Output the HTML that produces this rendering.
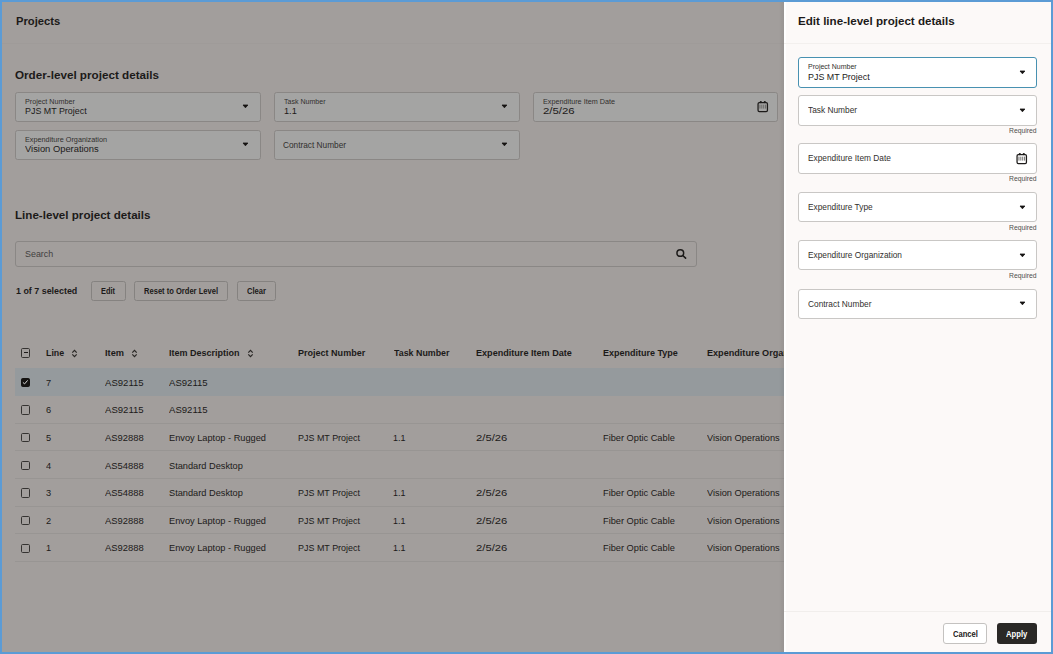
<!DOCTYPE html>
<html><head><meta charset="utf-8">
<style>
*{box-sizing:border-box;margin:0;padding:0}
html,body{width:1053px;height:654px;overflow:hidden}
body{position:relative;background:#a29e9c;font-family:"Liberation Sans",sans-serif;color:#1c1a19}
.t{position:absolute;white-space:nowrap;line-height:1;transform-origin:0 0}
.fld{position:absolute;height:30px;border:1px solid #8a8785;border-radius:2.6px;background:#a4a4a3}
.arr{position:absolute;width:0;height:0;border-left:2.75px solid transparent;border-right:2.75px solid transparent;border-top:3.3px solid #151311}
.btn{position:absolute;height:20.1px;border:1px solid #858280;border-radius:2.5px}
.row{position:absolute;left:15px;width:769px;height:27.65px;border-bottom:1px solid #989593}
.cb{position:absolute;width:9.4px;height:9.4px;border:1.2px solid #353331;border-radius:1.6px}
.dfld{position:absolute;left:797.5px;width:239.5px;height:30.4px;border:1px solid #c9c7c5;border-radius:3px;background:#fff}
</style></head><body>
<div style="position:absolute;left:2px;top:43px;width:782px;height:1px;background:#9f9b99"></div>
<div class="t" id="t0" style="left:15.5px;top:15.16px;font-size:11.65px;font-weight:700;color:#1c1a19;transform:scaleX(0.9622);">Projects</div>
<div class="t" id="t1" style="left:15.3px;top:69.07px;font-size:11.75px;font-weight:700;color:#1c1a19;transform:scaleX(0.9932);">Order-level project details</div>
<div class="fld" style="left:15px;top:92px;width:245.5px"></div>
<div class="t" id="t2" style="left:25px;top:97.83px;font-size:7.3px;font-weight:400;color:#32302e;transform:scaleX(0.9842);">Project Number</div>
<div class="t" id="t3" style="left:25px;top:105.89px;font-size:9.6px;font-weight:400;color:#1c1a19;transform:scaleX(0.9268);">PJS MT Project</div>
<svg style="position:absolute;left:241.6px;top:104.3px" width="7" height="5" viewBox="0 0 7 5"><path d="M1.0 1.0 H5.9 L3.45 3.8 Z" fill="#151311" stroke="#151311" stroke-width="0.8" stroke-linejoin="round"/></svg>
<div class="fld" style="left:274px;top:92px;width:245.5px"></div>
<div class="t" id="t4" style="left:284px;top:97.83px;font-size:7.3px;font-weight:400;color:#32302e;transform:scaleX(0.9655);">Task Number</div>
<div class="t" id="t5" style="left:284px;top:105.89px;font-size:9.6px;font-weight:400;color:#1c1a19;transform:scaleX(0.9593);">1.1</div>
<svg style="position:absolute;left:500.6px;top:104.3px" width="7" height="5" viewBox="0 0 7 5"><path d="M1.0 1.0 H5.9 L3.45 3.8 Z" fill="#151311" stroke="#151311" stroke-width="0.8" stroke-linejoin="round"/></svg>
<div class="fld" style="left:533px;top:92px;width:245px"></div>
<div class="t" id="t6" style="left:543px;top:97.83px;font-size:7.3px;font-weight:400;color:#32302e;transform:scaleX(0.9916);">Expenditure Item Date</div>
<div class="t" id="t7" style="left:543px;top:105.89px;font-size:9.6px;font-weight:400;color:#1c1a19;transform:scaleX(1.1878);">2/5/26</div>
<svg style="position:absolute;left:756px;top:100px" width="14" height="14" viewBox="0 0 14 14"><rect x="2.05" y="2.6" width="9.4" height="8.9" rx="1.3" fill="none" stroke="#1c1a19" stroke-width="1.25"/><circle cx="4.8" cy="2.1" r="1.1" fill="#1c1a19"/><circle cx="8.8" cy="2.1" r="1.1" fill="#1c1a19"/><g fill="#62605e"><rect x="3.5" y="4.6" width="0.9" height="4.0"/><rect x="5.4" y="4.6" width="0.9" height="4.0"/><rect x="7.3" y="4.6" width="0.9" height="4.0"/><rect x="9.2" y="4.6" width="0.9" height="4.0"/></g></svg>
<div class="fld" style="left:15px;top:130px;width:245.5px"></div>
<div class="t" id="t8" style="left:25px;top:135.83px;font-size:7.3px;font-weight:400;color:#32302e;transform:scaleX(0.9958);">Expenditure Organization</div>
<div class="t" id="t9" style="left:25px;top:143.89px;font-size:9.6px;font-weight:400;color:#1c1a19;transform:scaleX(0.9754);">Vision Operations</div>
<svg style="position:absolute;left:241.6px;top:142.3px" width="7" height="5" viewBox="0 0 7 5"><path d="M1.0 1.0 H5.9 L3.45 3.8 Z" fill="#151311" stroke="#151311" stroke-width="0.8" stroke-linejoin="round"/></svg>
<div class="fld" style="left:274px;top:130px;width:245.5px"></div>
<div class="t" id="t10" style="left:283px;top:140.50px;font-size:8.4px;font-weight:400;color:#32302e;transform:scaleX(0.9880);">Contract Number</div>
<svg style="position:absolute;left:500.6px;top:142.3px" width="7" height="5" viewBox="0 0 7 5"><path d="M1.0 1.0 H5.9 L3.45 3.8 Z" fill="#151311" stroke="#151311" stroke-width="0.8" stroke-linejoin="round"/></svg>
<div class="t" id="t11" style="left:15.3px;top:209.16px;font-size:11.65px;font-weight:700;color:#1c1a19;transform:scaleX(0.9974);">Line-level project details</div>
<div style="position:absolute;left:15px;top:241px;width:682px;height:25.6px;border:1px solid #8a8785;border-radius:3px"></div>
<div class="t" id="t12" style="left:24.8px;top:250.48px;font-size:8.9px;font-weight:400;color:#43413f;transform:scaleX(1.0027);">Search</div>
<svg style="position:absolute;left:675px;top:247px" width="13" height="13" viewBox="0 0 13 13"><circle cx="5.3" cy="6.0" r="3.35" fill="none" stroke="#1c1a19" stroke-width="1.5"/><line x1="7.8" y1="8.5" x2="10.6" y2="11.1" stroke="#1c1a19" stroke-width="1.6" stroke-linecap="round"/></svg>
<div class="t" id="t13" style="left:15.6px;top:286.00px;font-size:9.7px;font-weight:700;color:#1c1a19;transform:scaleX(0.9179);">1 of 7 selected</div>
<div class="btn" style="left:91.2px;top:281.1px;width:34.4px"></div>
<div class="t" id="t14" style="left:101.4px;top:286.93px;font-size:8.6px;font-weight:700;color:#1c1a19;transform:scaleX(0.8624);">Edit</div>
<div class="btn" style="left:134.1px;top:281.1px;width:93.5px"></div>
<div class="t" id="t15" style="left:143.85px;top:286.93px;font-size:8.6px;font-weight:700;color:#1c1a19;transform:scaleX(0.8803);">Reset to Order Level</div>
<div class="btn" style="left:237px;top:281.1px;width:38.5px"></div>
<div class="t" id="t16" style="left:246.75px;top:286.93px;font-size:8.6px;font-weight:700;color:#1c1a19;transform:scaleX(0.8837);">Clear</div>
<div class="cb" style="left:21px;top:348.2px"><div style="position:absolute;left:1.6px;top:2.9px;width:4.3px;height:1.4px;background:#1c1a19"></div></div>
<div class="t" id="t17" style="left:45.6px;top:348.51px;font-size:9.1px;font-weight:700;color:#1c1a19;transform:scaleX(0.9731);">Line</div>
<div class="t" id="t18" style="left:104.8px;top:348.51px;font-size:9.1px;font-weight:700;color:#1c1a19;transform:scaleX(1.0159);">Item</div>
<div class="t" id="t19" style="left:169px;top:348.51px;font-size:9.1px;font-weight:700;color:#1c1a19;transform:scaleX(0.9895);">Item Description</div>
<div class="t" id="t20" style="left:297.5px;top:348.51px;font-size:9.1px;font-weight:700;color:#1c1a19;transform:scaleX(0.9923);">Project Number</div>
<div class="t" id="t21" style="left:393.5px;top:348.51px;font-size:9.1px;font-weight:700;color:#1c1a19;transform:scaleX(0.9745);">Task Number</div>
<div class="t" id="t22" style="left:476.2px;top:348.51px;font-size:9.1px;font-weight:700;color:#1c1a19;transform:scaleX(0.9978);">Expenditure Item Date</div>
<div class="t" id="t23" style="left:603px;top:348.51px;font-size:9.1px;font-weight:700;color:#1c1a19;transform:scaleX(0.9889);">Expenditure Type</div>
<div class="t" id="t24" style="left:707px;top:348.51px;font-size:9.1px;font-weight:700;color:#1c1a19;">Expenditure Organization</div>
<svg style="position:absolute;left:71px;top:348.5px" width="7" height="10" viewBox="0 0 7 10"><path d="M1.3 3.7 L3.5 1.4 L5.7 3.7 M1.3 5.4 L3.5 7.7 L5.7 5.4" fill="none" stroke="#2a2826" stroke-width="1.2"/></svg>
<svg style="position:absolute;left:130.5px;top:348.5px" width="7" height="10" viewBox="0 0 7 10"><path d="M1.3 3.7 L3.5 1.4 L5.7 3.7 M1.3 5.4 L3.5 7.7 L5.7 5.4" fill="none" stroke="#2a2826" stroke-width="1.2"/></svg>
<svg style="position:absolute;left:246.5px;top:348.5px" width="7" height="10" viewBox="0 0 7 10"><path d="M1.3 3.7 L3.5 1.4 L5.7 3.7 M1.3 5.4 L3.5 7.7 L5.7 5.4" fill="none" stroke="#2a2826" stroke-width="1.2"/></svg>
<div class="row" style="top:368.4px;background:#959a9d;border-bottom-color:#959a9d"></div>
<div class="cb" style="left:21px;top:377.7px;background:#151311;border-color:#151311"><svg style="position:absolute;left:0.3px;top:0.4px" width="7" height="7" viewBox="0 0 7 7"><path d="M0.9 3.4 L2.6 4.9 L5.6 1.4" fill="none" stroke="#d4d4d4" stroke-width="1.0"/></svg></div>
<div class="t" id="t25" style="left:45.8px;top:377.57px;font-size:9.8px;font-weight:400;color:#1c1a19;transform:scaleX(0.9422);">7</div>
<div class="t" id="t26" style="left:104.8px;top:377.57px;font-size:9.8px;font-weight:400;color:#1c1a19;transform:scaleX(0.9774);">AS92115</div>
<div class="t" id="t27" style="left:169px;top:377.57px;font-size:9.8px;font-weight:400;color:#1c1a19;transform:scaleX(0.9774);">AS92115</div>
<div class="row" style="top:396.04999999999995px"></div>
<div class="cb" style="left:21px;top:405.34999999999997px"></div>
<div class="t" id="t28" style="left:45.8px;top:405.22px;font-size:9.8px;font-weight:400;color:#1c1a19;transform:scaleX(0.9422);">6</div>
<div class="t" id="t29" style="left:104.8px;top:405.22px;font-size:9.8px;font-weight:400;color:#1c1a19;transform:scaleX(0.9774);">AS92115</div>
<div class="t" id="t30" style="left:169px;top:405.22px;font-size:9.8px;font-weight:400;color:#1c1a19;transform:scaleX(0.9774);">AS92115</div>
<div class="row" style="top:423.7px"></div>
<div class="cb" style="left:21px;top:433.0px"></div>
<div class="t" id="t31" style="left:45.8px;top:432.87px;font-size:9.8px;font-weight:400;color:#1c1a19;transform:scaleX(0.9422);">5</div>
<div class="t" id="t32" style="left:104.8px;top:432.87px;font-size:9.8px;font-weight:400;color:#1c1a19;transform:scaleX(0.9600);">AS92888</div>
<div class="t" id="t33" style="left:169px;top:432.87px;font-size:9.8px;font-weight:400;color:#1c1a19;transform:scaleX(0.9422);">Envoy Laptop - Rugged</div>
<div class="t" id="t34" style="left:297.5px;top:432.87px;font-size:9.8px;font-weight:400;color:#1c1a19;transform:scaleX(0.9134);">PJS MT Project</div>
<div class="t" id="t35" style="left:393.3px;top:432.87px;font-size:9.8px;font-weight:400;color:#1c1a19;transform:scaleX(0.9101);">1.1</div>
<div class="t" id="t36" style="left:476.4px;top:432.87px;font-size:9.8px;font-weight:400;color:#1c1a19;transform:scaleX(1.1486);">2/5/26</div>
<div class="t" id="t37" style="left:603px;top:432.87px;font-size:9.8px;font-weight:400;color:#1c1a19;transform:scaleX(0.9422);">Fiber Optic Cable</div>
<div class="t" id="t38" style="left:707px;top:432.87px;font-size:9.8px;font-weight:400;color:#1c1a19;transform:scaleX(0.9422);">Vision Operations</div>
<div class="row" style="top:451.34999999999997px"></div>
<div class="cb" style="left:21px;top:460.65px"></div>
<div class="t" id="t39" style="left:45.8px;top:460.52px;font-size:9.8px;font-weight:400;color:#1c1a19;transform:scaleX(0.9422);">4</div>
<div class="t" id="t40" style="left:104.8px;top:460.52px;font-size:9.8px;font-weight:400;color:#1c1a19;transform:scaleX(0.9600);">AS54888</div>
<div class="t" id="t41" style="left:169px;top:460.52px;font-size:9.8px;font-weight:400;color:#1c1a19;transform:scaleX(0.9422);">Standard Desktop</div>
<div class="row" style="top:479.0px"></div>
<div class="cb" style="left:21px;top:488.3px"></div>
<div class="t" id="t42" style="left:45.8px;top:488.17px;font-size:9.8px;font-weight:400;color:#1c1a19;transform:scaleX(0.9422);">3</div>
<div class="t" id="t43" style="left:104.8px;top:488.17px;font-size:9.8px;font-weight:400;color:#1c1a19;transform:scaleX(0.9600);">AS54888</div>
<div class="t" id="t44" style="left:169px;top:488.17px;font-size:9.8px;font-weight:400;color:#1c1a19;transform:scaleX(0.9422);">Standard Desktop</div>
<div class="t" id="t45" style="left:297.5px;top:488.17px;font-size:9.8px;font-weight:400;color:#1c1a19;transform:scaleX(0.9134);">PJS MT Project</div>
<div class="t" id="t46" style="left:393.3px;top:488.17px;font-size:9.8px;font-weight:400;color:#1c1a19;transform:scaleX(0.9101);">1.1</div>
<div class="t" id="t47" style="left:476.4px;top:488.17px;font-size:9.8px;font-weight:400;color:#1c1a19;transform:scaleX(1.1486);">2/5/26</div>
<div class="t" id="t48" style="left:603px;top:488.17px;font-size:9.8px;font-weight:400;color:#1c1a19;transform:scaleX(0.9422);">Fiber Optic Cable</div>
<div class="t" id="t49" style="left:707px;top:488.17px;font-size:9.8px;font-weight:400;color:#1c1a19;transform:scaleX(0.9422);">Vision Operations</div>
<div class="row" style="top:506.65px"></div>
<div class="cb" style="left:21px;top:515.9499999999999px"></div>
<div class="t" id="t50" style="left:45.8px;top:515.82px;font-size:9.8px;font-weight:400;color:#1c1a19;transform:scaleX(0.9422);">2</div>
<div class="t" id="t51" style="left:104.8px;top:515.82px;font-size:9.8px;font-weight:400;color:#1c1a19;transform:scaleX(0.9600);">AS92888</div>
<div class="t" id="t52" style="left:169px;top:515.82px;font-size:9.8px;font-weight:400;color:#1c1a19;transform:scaleX(0.9422);">Envoy Laptop - Rugged</div>
<div class="t" id="t53" style="left:297.5px;top:515.82px;font-size:9.8px;font-weight:400;color:#1c1a19;transform:scaleX(0.9134);">PJS MT Project</div>
<div class="t" id="t54" style="left:393.3px;top:515.82px;font-size:9.8px;font-weight:400;color:#1c1a19;transform:scaleX(0.9101);">1.1</div>
<div class="t" id="t55" style="left:476.4px;top:515.82px;font-size:9.8px;font-weight:400;color:#1c1a19;transform:scaleX(1.1486);">2/5/26</div>
<div class="t" id="t56" style="left:603px;top:515.82px;font-size:9.8px;font-weight:400;color:#1c1a19;transform:scaleX(0.9422);">Fiber Optic Cable</div>
<div class="t" id="t57" style="left:707px;top:515.82px;font-size:9.8px;font-weight:400;color:#1c1a19;transform:scaleX(0.9422);">Vision Operations</div>
<div class="row" style="top:534.3px"></div>
<div class="cb" style="left:21px;top:543.5999999999999px"></div>
<div class="t" id="t58" style="left:45.8px;top:543.47px;font-size:9.8px;font-weight:400;color:#1c1a19;transform:scaleX(0.9422);">1</div>
<div class="t" id="t59" style="left:104.8px;top:543.47px;font-size:9.8px;font-weight:400;color:#1c1a19;transform:scaleX(0.9600);">AS92888</div>
<div class="t" id="t60" style="left:169px;top:543.47px;font-size:9.8px;font-weight:400;color:#1c1a19;transform:scaleX(0.9422);">Envoy Laptop - Rugged</div>
<div class="t" id="t61" style="left:297.5px;top:543.47px;font-size:9.8px;font-weight:400;color:#1c1a19;transform:scaleX(0.9134);">PJS MT Project</div>
<div class="t" id="t62" style="left:393.3px;top:543.47px;font-size:9.8px;font-weight:400;color:#1c1a19;transform:scaleX(0.9101);">1.1</div>
<div class="t" id="t63" style="left:476.4px;top:543.47px;font-size:9.8px;font-weight:400;color:#1c1a19;transform:scaleX(1.1486);">2/5/26</div>
<div class="t" id="t64" style="left:603px;top:543.47px;font-size:9.8px;font-weight:400;color:#1c1a19;transform:scaleX(0.9422);">Fiber Optic Cable</div>
<div class="t" id="t65" style="left:707px;top:543.47px;font-size:9.8px;font-weight:400;color:#1c1a19;transform:scaleX(0.9422);">Vision Operations</div>
<div style="position:absolute;left:779px;top:0;width:5px;height:654px;background:linear-gradient(to right,rgba(0,0,0,0),rgba(0,0,0,0.035) 50%,rgba(0,0,0,0.06))"></div>
<div style="position:absolute;left:784px;top:0;width:269px;height:654px;background:#fcf9f8"></div>
<div style="position:absolute;left:784px;top:0;width:2px;height:654px;background:#ffffff"></div>
<div style="position:absolute;left:784px;top:42.5px;width:269px;height:1px;background:#f3f0ee"></div>
<div style="position:absolute;left:784px;top:611px;width:269px;height:1px;background:#f1eeec"></div>
<div class="t" id="t66" style="left:798.3px;top:15.16px;font-size:11.65px;font-weight:700;color:#1c1a19;transform:scaleX(0.9968);">Edit line-level project details</div>
<div class="dfld" style="top:57px;border:1.8px solid #4891b1;height:30.8px"></div>
<div class="t" id="t67" style="left:808px;top:63.03px;font-size:7.3px;font-weight:400;color:#32302e;transform:scaleX(0.9608);">Project Number</div>
<div class="t" id="t68" style="left:808px;top:71.99px;font-size:9.6px;font-weight:400;color:#1c1a19;transform:scaleX(0.9268);">PJS MT Project</div>
<svg style="position:absolute;left:1018.6px;top:69.7px" width="7" height="5" viewBox="0 0 7 5"><path d="M1.0 1.0 H5.9 L3.45 3.8 Z" fill="#151311" stroke="#151311" stroke-width="0.8" stroke-linejoin="round"/></svg>
<div class="dfld" style="top:95.2px;"></div>
<div class="t" id="t69" style="left:808px;top:106.33px;font-size:8.6px;font-weight:400;color:#32302e;transform:scaleX(0.9692);">Task Number</div>
<svg style="position:absolute;left:1018.6px;top:107.9px" width="7" height="5" viewBox="0 0 7 5"><path d="M1.0 1.0 H5.9 L3.45 3.8 Z" fill="#151311" stroke="#151311" stroke-width="0.8" stroke-linejoin="round"/></svg>
<div class="t" id="t70" style="left:1009.2px;top:126.72px;font-size:7.2px;font-weight:400;color:#4f4d4b;transform:scaleX(0.9461);">Required</div>
<div class="dfld" style="top:143.3px;"></div>
<div class="t" id="t71" style="left:808px;top:154.43px;font-size:8.6px;font-weight:400;color:#32302e;transform:scaleX(0.9692);">Expenditure Item Date</div>
<svg style="position:absolute;left:1015px;top:151.8px" width="14" height="14" viewBox="0 0 14 14"><rect x="2.05" y="2.6" width="9.4" height="8.9" rx="1.3" fill="none" stroke="#1c1a19" stroke-width="1.25"/><circle cx="4.8" cy="2.1" r="1.1" fill="#1c1a19"/><circle cx="8.8" cy="2.1" r="1.1" fill="#1c1a19"/><g fill="#62605e"><rect x="3.5" y="4.6" width="0.9" height="4.0"/><rect x="5.4" y="4.6" width="0.9" height="4.0"/><rect x="7.3" y="4.6" width="0.9" height="4.0"/><rect x="9.2" y="4.6" width="0.9" height="4.0"/></g></svg>
<div class="t" id="t72" style="left:1009.2px;top:174.82px;font-size:7.2px;font-weight:400;color:#4f4d4b;transform:scaleX(0.9461);">Required</div>
<div class="dfld" style="top:192px;"></div>
<div class="t" id="t73" style="left:808px;top:203.13px;font-size:8.6px;font-weight:400;color:#32302e;transform:scaleX(0.9692);">Expenditure Type</div>
<svg style="position:absolute;left:1018.6px;top:204.7px" width="7" height="5" viewBox="0 0 7 5"><path d="M1.0 1.0 H5.9 L3.45 3.8 Z" fill="#151311" stroke="#151311" stroke-width="0.8" stroke-linejoin="round"/></svg>
<div class="t" id="t74" style="left:1009.2px;top:223.52px;font-size:7.2px;font-weight:400;color:#4f4d4b;transform:scaleX(0.9461);">Required</div>
<div class="dfld" style="top:240px;"></div>
<div class="t" id="t75" style="left:808px;top:251.13px;font-size:8.6px;font-weight:400;color:#32302e;transform:scaleX(0.9692);">Expenditure Organization</div>
<svg style="position:absolute;left:1018.6px;top:252.7px" width="7" height="5" viewBox="0 0 7 5"><path d="M1.0 1.0 H5.9 L3.45 3.8 Z" fill="#151311" stroke="#151311" stroke-width="0.8" stroke-linejoin="round"/></svg>
<div class="t" id="t76" style="left:1009.2px;top:271.52px;font-size:7.2px;font-weight:400;color:#4f4d4b;transform:scaleX(0.9461);">Required</div>
<div class="dfld" style="top:288.5px;"></div>
<div class="t" id="t77" style="left:808px;top:299.63px;font-size:8.6px;font-weight:400;color:#32302e;transform:scaleX(0.9692);">Contract Number</div>
<svg style="position:absolute;left:1018.6px;top:301.2px" width="7" height="5" viewBox="0 0 7 5"><path d="M1.0 1.0 H5.9 L3.45 3.8 Z" fill="#151311" stroke="#151311" stroke-width="0.8" stroke-linejoin="round"/></svg>
<div style="position:absolute;left:943.2px;top:623px;width:43.8px;height:20.7px;border:1px solid #c4c2c0;border-radius:3px;background:#fff"></div>
<div class="t" id="t78" style="left:953px;top:629.63px;font-size:8.6px;font-weight:700;color:#1c1a19;transform:scaleX(0.8834);">Cancel</div>
<div style="position:absolute;left:997px;top:623px;width:40px;height:20.7px;border-radius:3px;background:#2a2826"></div>
<div class="t" id="t79" style="left:1006.2px;top:629.63px;font-size:8.6px;font-weight:700;color:#ffffff;transform:scaleX(0.8921);">Apply</div>
<div style="position:absolute;left:0;top:0;width:1053px;height:654px;border:2px solid #5b9bd5"></div>
</body></html>
